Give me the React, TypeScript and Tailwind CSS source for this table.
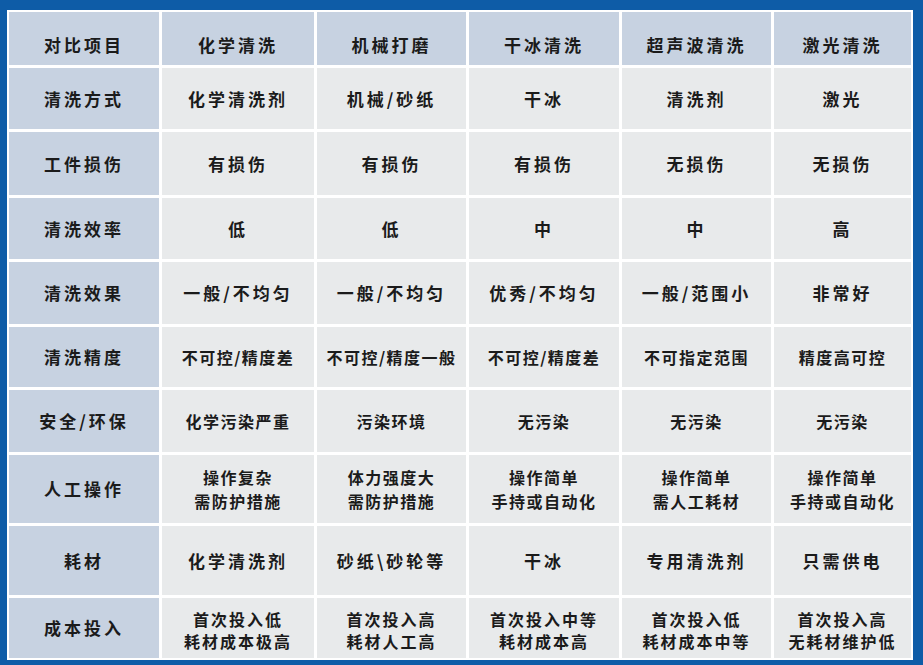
import React from 'react';

type Size = 'lg' | 'md' | 'sm';
type Cell = { text: string; size?: Size };

const headers = ['对比项目', '化学清洗', '机械打磨', '干冰清洗', '超声波清洗', '激光清洗'];

const rows: { label: string; size: Size; cells: string[] }[] = [
  { label: '清洗方式', size: 'lg', cells: ['化学清洗剂', '机械/砂纸', '干冰', '清洗剂', '激光'] },
  { label: '工件损伤', size: 'lg', cells: ['有损伤', '有损伤', '有损伤', '无损伤', '无损伤'] },
  { label: '清洗效率', size: 'lg', cells: ['低', '低', '中', '中', '高'] },
  { label: '清洗效果', size: 'lg', cells: ['一般/不均匀', '一般/不均匀', '优秀/不均匀', '一般/范围小', '非常好'] },
  { label: '清洗精度', size: 'sm', cells: ['不可控/精度差', '不可控/精度一般', '不可控/精度差', '不可指定范围', '精度高可控'] },
  { label: '安全/环保', size: 'sm', cells: ['化学污染严重', '污染环境', '无污染', '无污染', '无污染'] },
  {
    label: '人工操作',
    size: 'sm',
    cells: ['操作复杂\n需防护措施', '体力强度大\n需防护措施', '操作简单\n手持或自动化', '操作简单\n需人工耗材', '操作简单\n手持或自动化'],
  },
  { label: '耗材', size: 'lg', cells: ['化学清洗剂', '砂纸\\砂轮等', '干冰', '专用清洗剂', '只需供电'] },
  {
    label: '成本投入',
    size: 'md',
    cells: ['首次投入低\n耗材成本极高', '首次投入高\n耗材人工高', '首次投入中等\n耗材成本高', '首次投入低\n耗材成本中等', '首次投入高\n无耗材维护低'],
  },
];

const sizeClass: Record<Size, string> = {
  lg: 'text-[17px] tracking-[3px] leading-[24px]',
  md: 'text-[16px] tracking-[2px] leading-[22px]',
  sm: 'text-[16px] tracking-[1.5px] leading-[24px]',
};

function TableCell({ text, size = 'lg', head, top }: Cell & { head?: boolean; top?: boolean }) {
  return (
    <div
      className={`flex flex-col items-center justify-center text-center font-bold text-[#1b1b1b] ${
        head ? 'bg-[#c7d2e1]' : 'bg-[#e8eaeb]'
      } ${top ? 'pt-[12px]' : size === 'md' ? 'pt-[4px]' : ''} ${sizeClass[size]}`}
    >
      {text.split('\n').map((line, i) => (
        <span key={i}>{line}</span>
      ))}
    </div>
  );
}

export default function App() {
  return (
    <div
      className="w-[923px] h-[665px] overflow-hidden bg-[#0e5ca7] pt-[10px] pl-[7px]"
      style={{ fontFamily: '"Noto Sans CJK SC", "Noto Sans", sans-serif' }}
    >
      <div className="grid w-[906px] grid-cols-[150px_152px_149px_150px_149px_137px] grid-rows-[53px_61px_63px_61px_62px_60px_62px_68px_69px_60px] gap-[3px] bg-white p-[2px]">
        {headers.map((h) => (
          <TableCell key={h} text={h} head top />
        ))}
        {rows.map((row) => (
          <React.Fragment key={row.label}>
            <TableCell text={row.label} size="lg" head />
            {row.cells.map((c, i) => (
              <TableCell key={i} text={c} size={row.size} />
            ))}
          </React.Fragment>
        ))}
      </div>
    </div>
  );
}
